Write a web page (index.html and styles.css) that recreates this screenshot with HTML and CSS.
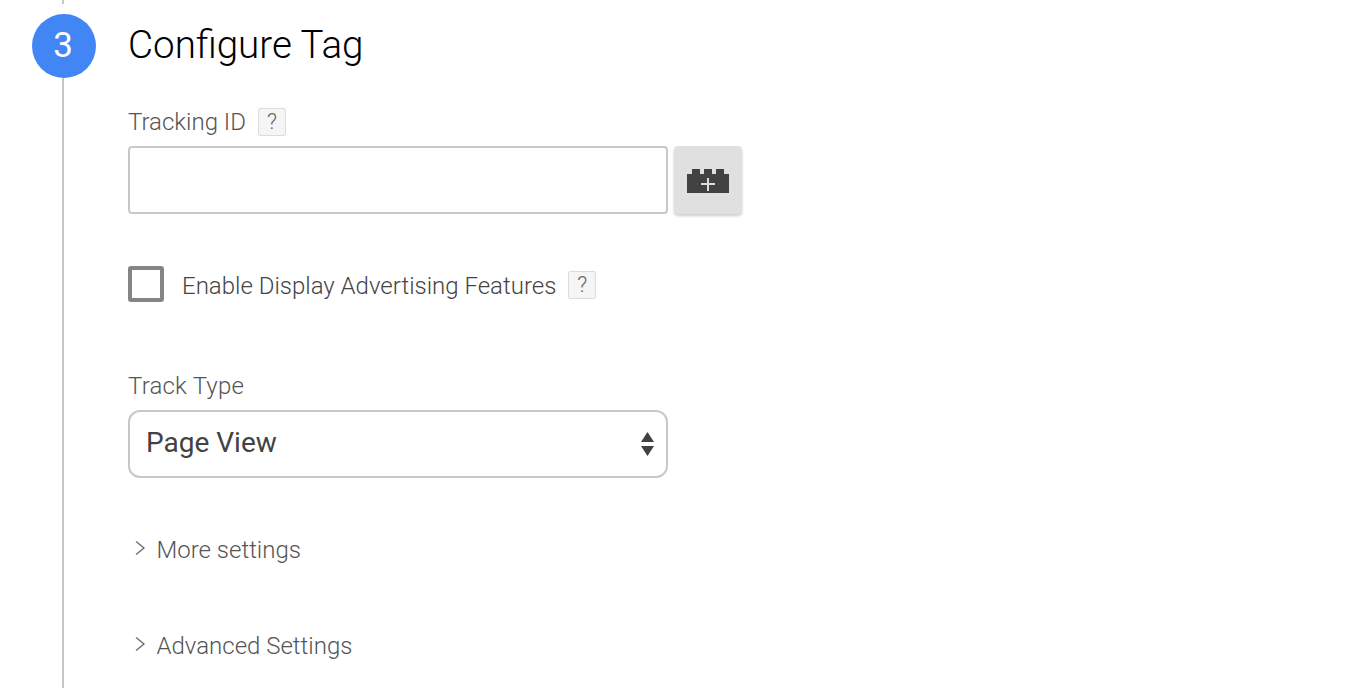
FILE: index.html
```html
<!DOCTYPE html>
<html lang="en">
<head>
  <meta charset="UTF-8" />
  <title>Configure Tag</title>
  <link rel="stylesheet" href="styles.css">
</head>
<body>

  <div class="step">
    <div class="rail">
      <div class="rail-top"></div>
      <div class="step-num">3</div>
      <div class="rail-line"></div>
    </div>

    <div class="step-body">
      <h1 class="step-title">Configure Tag</h1>

      <div class="label-row tracking-label">
        <span class="field-label">Tracking ID</span>
        <span class="help">?</span>
      </div>
      <div class="input-row">
        <div class="text-input"></div>
        <button class="var-button">
          <svg width="42" height="24" viewBox="0 0 42 24">
            <path fill="#424242" d="M0 5h5V0h8v5h4V0h8v5h4V0h8v5h5v19H0z" />
            <path fill="#dedede" d="M20 9h2v5h6v2h-6v6h-2v-6h-6v-2h6z" />
          </svg>
        </button>
      </div>

      <div class="label-row check-row">
        <span class="checkbox"></span>
        <span class="check-label">Enable Display Advertising Features</span>
        <span class="help">?</span>
      </div>

      <div class="field-label track-label">Track Type</div>
      <div class="select-box">
        <span class="select-value">Page View</span>
        <svg class="select-arrows" width="13" height="24" viewBox="0 0 13 24">
          <path fill="#424242" d="M6.500 0L13 10H0zM0 14h13L6.500 24z" />
        </svg>
      </div>

      <div class="expander more">
        <svg width="12" height="16" viewBox="0 0 12 16">
          <path fill="none" stroke="#666" stroke-width="1.300" d="M2 1.500L10 8l-8 6.500" />
        </svg>
        <span>More settings</span>
      </div>
      <div class="expander advanced">
        <svg width="12" height="16" viewBox="0 0 12 16">
          <path fill="none" stroke="#666" stroke-width="1.300" d="M2 1.500L10 8l-8 6.500" />
        </svg>
        <span>Advanced Settings</span>
      </div>
    </div>
  </div>

</body>
</html>
```

FILE: styles.css
```css
html, body {
  margin: 0;
  padding: 0;
  height: 100%;
  overflow: hidden;
  background: #fff;
  font-family: Roboto, "Liberation Sans", sans-serif;
}

.step {
  display: flex;
  height: 688px;
}

.rail {
  width: 128px;
  flex: none;
  display: flex;
  flex-direction: column;
  align-items: center;
  box-sizing: border-box;
  padding: 0 32px;
}

.rail-top {
  width: 2px;
  height: 4px;
  margin: 0 2px 10px 0;
  background: #c8c8c8;
  flex: none;
}

.rail-line {
  width: 2px;
  flex: 1;
  margin-right: 2px;
  background: #c8c8c8;
}

.step-num {
  width: 64px;
  height: 64px;
  flex: none;
  box-sizing: border-box;
  padding-right: 2px;
  border-radius: 50%;
  background: #4285f4;
  color: #fff;
  font-size: 35px;
  font-weight: 400;
  line-height: 64px;
  text-align: center;
}

.step-body {
  flex: 1;
}

.step-title {
  margin: 22px 0 0;
  font-size: 38.6px;
  font-weight: 300;
  line-height: 46px;
  color: #000;
}

.label-row {
  display: flex;
  align-items: center;
}

.tracking-label {
  margin-top: 40px;
  height: 28px;
}

.field-label {
  font-size: 24px;
  font-weight: 300;
  line-height: 28px;
  color: #555;
}

.help {
  width: 26px;
  height: 26px;
  margin-left: 12px;
  border: 1px solid #dcdcdc;
  border-radius: 2px;
  background: #f5f5f5;
  color: #666;
  font-size: 22px;
  font-weight: 300;
  line-height: 26px;
  text-align: center;
}

.check-row .help {
  margin-top: 2px;
}

.input-row {
  display: flex;
  margin-top: 10px;
  gap: 6px;
}

.text-input {
  width: 540px;
  height: 68px;
  box-sizing: border-box;
  border: 2px solid #c8c8c8;
  border-radius: 4px;
}

.var-button {
  width: 68px;
  height: 68px;
  padding: 2px 0 0;
  border: none;
  border-radius: 4px;
  background: #e0e0e0;
  box-shadow: 0 2px 3px rgba(0, 0, 0, 0.2);
  display: flex;
  align-items: center;
  justify-content: center;
}

.check-row {
  margin-top: 52px;
  height: 36px;
}

.checkbox {
  width: 36px;
  height: 36px;
  box-sizing: border-box;
  border: 4px solid #858585;
  border-radius: 3px;
}

.check-label {
  margin: 4px 0 0 18px;
  font-size: 24px;
  font-weight: 300;
  color: #444;
}

.track-label {
  margin-top: 70px;
  letter-spacing: 0.2px;
}

.select-box {
  width: 540px;
  height: 68px;
  margin-top: 10px;
  box-sizing: border-box;
  border: 2px solid #c8c8c8;
  border-radius: 12px;
  padding: 0 12px 0 16px;
  display: flex;
  align-items: center;
  justify-content: space-between;
}

.select-value {
  margin-bottom: 4px;
  font-size: 28px;
  color: #424242;
}

.expander {
  display: flex;
  align-items: center;
  height: 28px;
  font-size: 24px;
  font-weight: 300;
  color: #555;
}

.expander svg {
  margin: 0 10.5px 4px 6px;
}

.more {
  margin-top: 58px;
}

.advanced {
  margin-top: 68px;
}
```
